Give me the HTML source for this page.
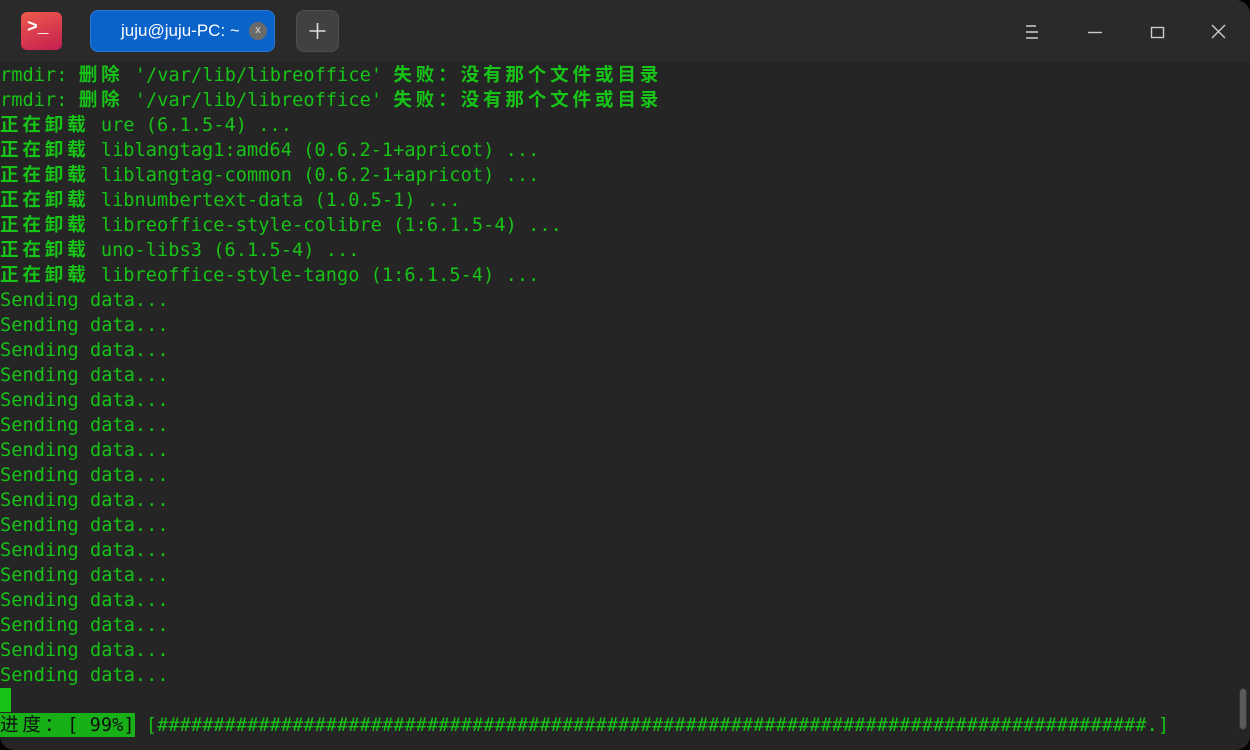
<!DOCTYPE html>
<html><head><meta charset="utf-8"><style>
html,body{margin:0;padding:0;background:#000;}
.win{position:relative;width:1250px;height:750px;background:#252525;border-radius:0 14px 14px 14px;overflow:hidden;}
.tb{position:absolute;left:0;top:0;width:1250px;height:62px;background:#2a2a2a;}
.logo{position:absolute;left:21px;top:12px;width:41px;height:38px;border-radius:6px;background:linear-gradient(160deg,#ee5a4a,#c41f50);}
.logo span{position:absolute;left:6px;top:6px;color:#fff;font:bold 18px "Liberation Mono",monospace;}
.tab{position:absolute;left:90px;top:10px;width:185px;height:42px;border-radius:8px;background:#0a63c9;border:1px solid #2a7ad8;box-sizing:border-box;}
.tab .t{position:absolute;left:30px;top:10px;color:#fff;font:17px "Liberation Sans",sans-serif;}
.tab .x{position:absolute;left:158px;top:11px;width:18px;height:18px;border-radius:50%;background:#6a6a6a;color:#ddd;font:11px "Liberation Sans",sans-serif;text-align:center;line-height:17px;}
.plus{position:absolute;left:296px;top:10px;width:43px;height:42px;border-radius:8px;background:#414141;border:1px solid #4e4e4e;box-sizing:border-box;}
.term{position:absolute;left:0;top:63px;font:18.6px "DejaVu Sans Mono","Liberation Mono",monospace;color:#17c317;letter-spacing:0.05px;}
.l{height:25px;line-height:25px;overflow:hidden;white-space:pre;}
.c{font-family:"Noto Sans CJK SC",sans-serif;letter-spacing:3.8px;font-weight:bold;line-height:0;}
.cur{position:absolute;left:0;top:688px;width:11px;height:24px;background:#17c317;}
.hl{background:#17b017;color:#101010;display:inline-block;height:24px;line-height:25px;vertical-align:top;margin-top:0px;}
.hl .c{font-weight:normal;}
.sb{position:absolute;left:1239px;top:688px;width:8px;height:42px;border-radius:4px;background:#5a5a5a;border:1px solid #333;box-sizing:border-box;}
</style></head><body><div class="win">
<div class="tb">
<div class="logo"><span>&gt;_</span></div>
<div class="tab"><span class="t">juju@juju-PC: ~</span><span class="x">x</span></div>
<div class="plus"><svg width="43" height="42" style="position:absolute;left:-1px;top:-1px"><path d="M21.5 13v16M13.5 21h16" stroke="#ddd" stroke-width="1.6"/></svg></div>
<svg width="250" height="62" style="position:absolute;left:1000px;top:0">
<path d="M26 26h10M26 32h12M26 38h12" stroke="#ccc" stroke-width="1.4"/>
<path d="M88 32.5h14" stroke="#ccc" stroke-width="1.4"/>
<rect x="151.5" y="27.5" width="12" height="10" fill="none" stroke="#ccc" stroke-width="1.4"/>
<path d="M212 25l13 13M225 25l-13 13" stroke="#ccc" stroke-width="1.4"/>
</svg>
</div>
<div class="term"><div class="l">rmdir: <span class="c">删除</span> '/var/lib/libreoffice' <span class="c">失败：没有那个文件或目录</span></div><div class="l">rmdir: <span class="c">删除</span> '/var/lib/libreoffice' <span class="c">失败：没有那个文件或目录</span></div><div class="l"><span class="c">正在卸载</span> ure (6.1.5-4) ...</div><div class="l"><span class="c">正在卸载</span> liblangtag1:amd64 (0.6.2-1+apricot) ...</div><div class="l"><span class="c">正在卸载</span> liblangtag-common (0.6.2-1+apricot) ...</div><div class="l"><span class="c">正在卸载</span> libnumbertext-data (1.0.5-1) ...</div><div class="l"><span class="c">正在卸载</span> libreoffice-style-colibre (1:6.1.5-4) ...</div><div class="l"><span class="c">正在卸载</span> uno-libs3 (6.1.5-4) ...</div><div class="l"><span class="c">正在卸载</span> libreoffice-style-tango (1:6.1.5-4) ...</div><div class="l">Sending data...</div><div class="l">Sending data...</div><div class="l">Sending data...</div><div class="l">Sending data...</div><div class="l">Sending data...</div><div class="l">Sending data...</div><div class="l">Sending data...</div><div class="l">Sending data...</div><div class="l">Sending data...</div><div class="l">Sending data...</div><div class="l">Sending data...</div><div class="l">Sending data...</div><div class="l">Sending data...</div><div class="l">Sending data...</div><div class="l">Sending data...</div><div class="l">Sending data...</div><div class="l"> </div><div class="l"><span class="hl"><span class="c">进度：</span>[ 99%]</span> [########################################################################################.]</div></div>
<div class="cur"></div>
<div class="sb"></div>
</div></body></html>
